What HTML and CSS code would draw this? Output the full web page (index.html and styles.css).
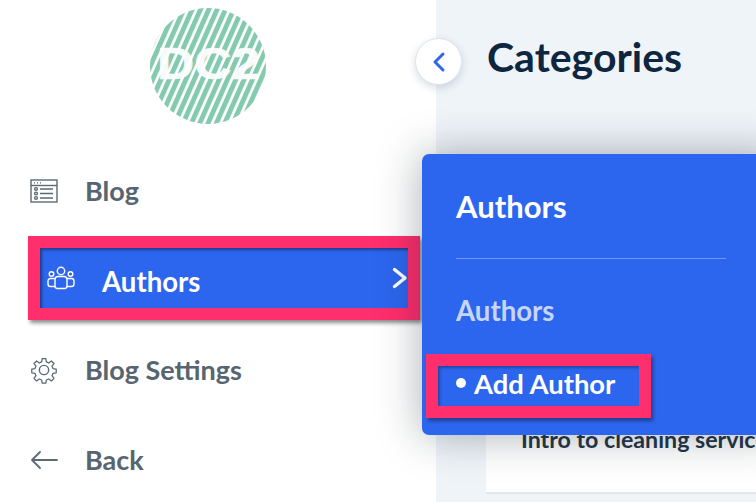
FILE: index.html
```html
<!DOCTYPE html>
<html lang="en">
<head>
<meta charset="utf-8">
<title>Categories</title>
<link rel="stylesheet" href="styles.css">
</head>
<body>
<div class="app">
  <aside class="sidebar">
    <div class="logo">
      <svg width="118" height="118" viewBox="0 0 118 118">
        <defs>
          <pattern id="stripes" width="7.600" height="10" patternUnits="userSpaceOnUse" patternTransform="rotate(24)">
            <rect width="4.900" height="10" fill="#84caaf"/>
          </pattern>
        </defs>
        <circle cx="59" cy="59" r="58" fill="url(#stripes)"/>
        <text x="8" y="72" class="logo-text" textLength="103" lengthAdjust="spacingAndGlyphs">DC2</text>
      </svg>
    </div>
    <nav class="nav">
      <a class="nav-item nav-blog">
        <svg class="nav-icon" width="28" height="24" viewBox="0 0 28 24" fill="none" stroke="#5b6a75" stroke-width="1.400">
          <rect x="1" y="1" width="26" height="22"/>
          <path d="M1 6.500h26"/>
          <path d="M4 3.800h1M7 3.800h1M10 3.800h1" stroke-width="1.300"/>
          <circle cx="6" cy="10" r="1.400"/><circle cx="6" cy="14.500" r="1.400"/><circle cx="6" cy="19" r="1.400"/>
          <path d="M10 10h13M10 14.500h13M10 19h13"/>
        </svg>
        <span>Blog</span>
      </a>
      <a class="nav-item nav-active">
        <svg class="nav-icon" width="28" height="24" viewBox="0 0 28 24" fill="none" stroke="#fff" stroke-width="1.400" stroke-linecap="round" stroke-linejoin="round">
          <circle cx="14" cy="5" r="3.700"/>
          <circle cx="4.500" cy="8" r="2.300"/>
          <circle cx="23.500" cy="8" r="2.300"/>
          <path d="M8 13.500c0-2 1.500-3 3-3h6c1.500 0 3 1 3 3v7c0 1-.8 1.800-2 2h-8c-1.200-.2-2-1-2-2z"/>
          <path d="M8 12.500H3.500c-1.500 0-2.500 1-2.500 2.500v3c0 1.500 1 2.500 2.500 2.500H8"/>
          <path d="M20 12.500h4.500c1.500 0 2.500 1 2.500 2.500v3c0 1.500-1 2.500-2.500 2.500H20"/>
        </svg>
        <span class="nav-active-label">Authors</span>
        <svg class="chevron" width="16" height="22" viewBox="0 0 16 22" fill="none" stroke="#fff" stroke-width="3.400" stroke-linecap="round" stroke-linejoin="round">
          <path d="M2.500 2.500 13 11 2.500 19.500"/>
        </svg>
      </a>
      <a class="nav-item nav-settings">
        <svg class="nav-icon" width="28" height="28" viewBox="0 0 24 24" fill="none" stroke="#5b6a75" stroke-width="1.200" stroke-linejoin="round">
          <circle cx="12" cy="12" r="4"/>
          <path d="M10.300 1.500h3.400l.5 3 2.200.9 2.500-1.800 2.400 2.400-1.800 2.500.9 2.200 3 .5v3.400l-3 .5-.9 2.200 1.800 2.500-2.400 2.400-2.500-1.800-2.200.9-.5 3h-3.400l-.5-3-2.200-.9-2.500 1.800-2.400-2.400 1.800-2.500-.9-2.200-3-.5v-3.400l3-.5.9-2.200-1.800-2.500 2.400-2.400 2.500 1.800 2.200-.9z" transform="translate(12 12) scale(.92) translate(-12 -12)"/>
        </svg>
        <span>Blog Settings</span>
      </a>
      <a class="nav-item nav-back">
        <svg class="nav-icon" width="28" height="20" viewBox="0 0 28 20" fill="none" stroke="#5b6a75" stroke-width="1.800" stroke-linecap="round" stroke-linejoin="round">
          <path d="M27 10H2M10 2l-8 8 8 8"/>
        </svg>
        <span>Back</span>
      </a>
    </nav>
  </aside>
  <main class="main">
    <h1 class="title">Categories</h1>
    <section class="card">
      <div class="card-row">Intro to cleaning services</div>
    </section>
  </main>
  <button class="collapse" type="button" aria-label="Collapse">
    <svg width="14" height="22" viewBox="0 0 14 22" fill="none" stroke="#2d66ee" stroke-width="3" stroke-linecap="round" stroke-linejoin="round">
      <path d="M11 3 3 11l8 8"/>
    </svg>
  </button>
  <div class="popup">
    <div class="popup-title">Authors</div>
    <div class="popup-rule"></div>
    <div class="popup-link">Authors</div>
    <div class="popup-add"><span class="dot"></span>Add Author</div>
  </div>
</div>
</body>
</html>
```
FILE: styles.css
```css
* { box-sizing: border-box; }
html, body { margin: 0; height: 100%; overflow: hidden; }
body { font-family: Lato, "Open Sans", sans-serif; background: #fff; }
.app { position: relative; display: flex; width: 756px; height: 502px; overflow: hidden; }

.sidebar { width: 436px; flex: none; background: #fff; padding-top: 7px; }
.logo { height: 118px; margin-left: 149px; }
.logo svg { display: block; }
.logo-text { font-family: "Liberation Sans", Arial, sans-serif; font-weight: 700; font-size: 44px; fill: #fff; stroke: #fff; stroke-width: .6; opacity: .93; }

.nav { display: flex; flex-direction: column; margin-top: 36px; }
.nav-item { display: flex; align-items: center; height: 60px; padding-left: 30px; font-size: 27px; font-weight: 700; color: #56656f; white-space: nowrap; }
.nav-item > span { padding-bottom: 2px; }
.nav-icon { flex: none; width: 28px; margin-right: 27px; }
.nav-active { margin: 15px 0 0 28px; width: 392px; height: 84px; padding: 0 0 0 7px; color: #fff; background: #2d66ee; border: 12px solid #ff2e6c; box-shadow: 2px 3px 4px rgba(0, 0, 0, .45), inset 2px 2px 3px rgba(0, 0, 0, .4); }
.nav-item > .nav-active-label { flex: 1; padding: 6px 0 0; font-size: 27.600px; }

.nav-settings { margin-top: 20px; }
.nav-back { margin-top: 30px; }

.main { flex: 1; min-width: 0; background: #eff4f9; padding: 34px 0 0 51px; }
.title { margin: 0; font-size: 41px; line-height: 46px; font-weight: 700; color: #0f2640; white-space: nowrap; }
.card { margin: 300px -20px 0 -1px; background: #fff; }
.card-row { height: 114px; padding: 45px 0 0 35px; border-bottom: 2px solid #e2e5e9; font-size: 23.200px; line-height: 28px; font-weight: 700; color: #24364a; white-space: nowrap; overflow: hidden; }

.collapse { position: absolute; left: 415px; top: 38px; width: 47px; height: 47px; padding: 0; display: flex; align-items: center; justify-content: center; background: #fff; border: 1px solid #dfe4ec; border-radius: 50%; box-shadow: 0 3px 8px rgba(40, 60, 100, .18); }

.popup { position: absolute; left: 422px; top: 154px; width: 360px; height: 281px; padding: 33px 0 0 34px; background: #2d66ee; border-radius: 7px; color: #fff; box-shadow: 0 0 44px rgba(20, 30, 40, .36); }
.popup-title { font-size: 31px; line-height: 38px; font-weight: 700; }
.popup-rule { width: 270px; height: 1px; margin-top: 33px; background: rgba(255, 255, 255, .32); }
.popup-link { margin-top: 37px; font-size: 27.600px; line-height: 30px; font-weight: 700; color: #c6d5fa; }
.popup-add { position: absolute; left: 4px; top: 200px; width: 225px; height: 64px; display: flex; align-items: center; padding: 0 0 6px 18px; border: 12px solid #ff2e6c; font-size: 27.400px; font-weight: 700; white-space: nowrap; box-shadow: 2px 3px 4px rgba(0, 0, 0, .4), inset 2px 2px 3px rgba(0, 0, 0, .3); }
.dot { width: 10px; height: 10px; margin-right: 8px; border-radius: 50%; background: #fff; flex: none; }
```
